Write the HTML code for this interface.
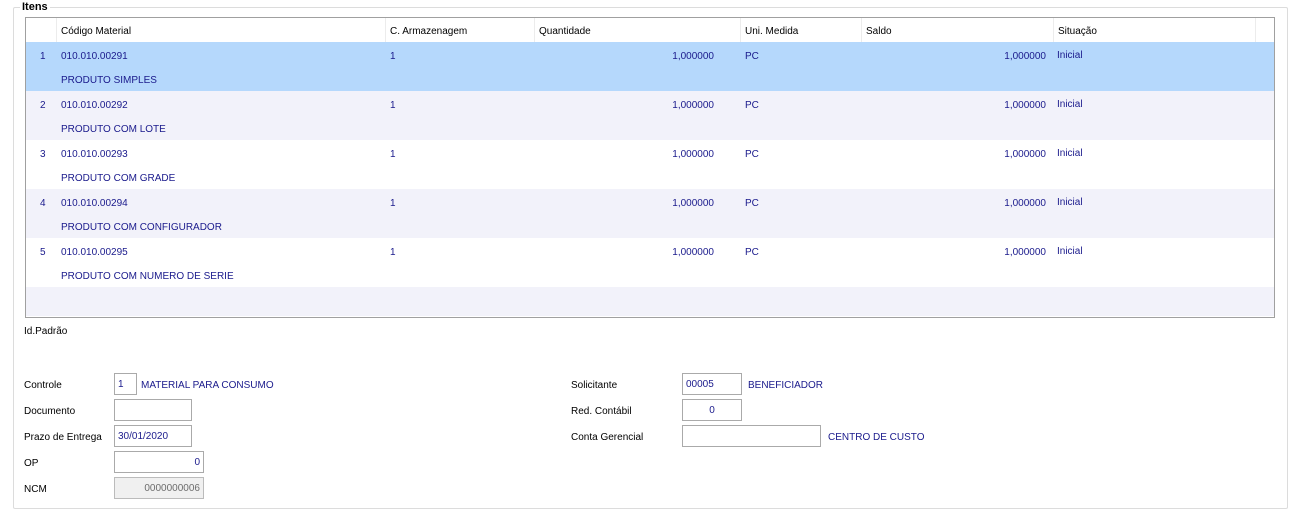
<!DOCTYPE html>
<html><head><meta charset="utf-8"><style>
*{margin:0;padding:0;box-sizing:border-box}
body{width:1298px;height:518px;background:#fff;font-family:"Liberation Sans",sans-serif;font-size:10px;color:#000;position:relative;overflow:hidden}
.a{position:absolute;white-space:nowrap;line-height:13px}
.b{color:#1a1a8c}
.fs{position:absolute;left:13px;top:7px;width:1275px;height:502px;border:1px solid #dcdcdc;border-radius:2px}
.leg{position:absolute;left:6px;top:-7px;background:#fff;padding:0 2px;font-weight:bold;font-size:11px;line-height:12px}
.grid{position:absolute;left:25px;top:17px;width:1250px;height:301px;border:1px solid #a0a0a0;background:#fff;overflow:hidden}
.hd{position:absolute;top:0;height:24px;line-height:27px;padding-left:4px;border-right:1px solid #ececec}
.row{position:absolute;left:0;width:1248px;height:49px}
.inp{position:absolute;border:1px solid #aaa;background:#fff;height:22px;line-height:22px;padding:0 3px;color:#1a1a8c}
</style></head><body>
<div class="fs"><div class="leg">Itens</div></div>
<div class="grid">
<div class="hd" style="left:0;width:31px"></div>
<div class="hd" style="left:31px;width:329px">Código Material</div>
<div class="hd" style="left:360px;width:149px">C. Armazenagem</div>
<div class="hd" style="left:509px;width:206px">Quantidade</div>
<div class="hd" style="left:715px;width:121px">Uni. Medida</div>
<div class="hd" style="left:836px;width:192px">Saldo</div>
<div class="hd" style="left:1028px;width:202px">Situação</div>
<div class="row" style="top:24px;background:#b5d8fc"></div>
<div class="row" style="top:73px;background:#f2f2fa"></div>
<div class="row" style="top:122px;background:#fff"></div>
<div class="row" style="top:171px;background:#f2f2fa"></div>
<div class="row" style="top:220px;background:#fff"></div>
<div class="row" style="top:269px;height:29px;background:#f2f2fa"></div>
</div>
<div class="a b" style="left:40px;top:50px">1</div><div class="a b" style="left:61px;top:50px">010.010.00291</div><div class="a b" style="left:390px;top:50px">1</div><div class="a b" style="left:668px;top:50px;width:46px;text-align:right">1,000000</div><div class="a b" style="left:745px;top:50px">PC</div><div class="a b" style="left:1000px;top:50px;width:46px;text-align:right">1,000000</div><div class="a b" style="left:1057px;top:49px">Inicial</div><div class="a b" style="left:61px;top:74px">PRODUTO SIMPLES</div>
<div class="a b" style="left:40px;top:99px">2</div><div class="a b" style="left:61px;top:99px">010.010.00292</div><div class="a b" style="left:390px;top:99px">1</div><div class="a b" style="left:668px;top:99px;width:46px;text-align:right">1,000000</div><div class="a b" style="left:745px;top:99px">PC</div><div class="a b" style="left:1000px;top:99px;width:46px;text-align:right">1,000000</div><div class="a b" style="left:1057px;top:98px">Inicial</div><div class="a b" style="left:61px;top:123px">PRODUTO COM LOTE</div>
<div class="a b" style="left:40px;top:148px">3</div><div class="a b" style="left:61px;top:148px">010.010.00293</div><div class="a b" style="left:390px;top:148px">1</div><div class="a b" style="left:668px;top:148px;width:46px;text-align:right">1,000000</div><div class="a b" style="left:745px;top:148px">PC</div><div class="a b" style="left:1000px;top:148px;width:46px;text-align:right">1,000000</div><div class="a b" style="left:1057px;top:147px">Inicial</div><div class="a b" style="left:61px;top:172px">PRODUTO COM GRADE</div>
<div class="a b" style="left:40px;top:197px">4</div><div class="a b" style="left:61px;top:197px">010.010.00294</div><div class="a b" style="left:390px;top:197px">1</div><div class="a b" style="left:668px;top:197px;width:46px;text-align:right">1,000000</div><div class="a b" style="left:745px;top:197px">PC</div><div class="a b" style="left:1000px;top:197px;width:46px;text-align:right">1,000000</div><div class="a b" style="left:1057px;top:196px">Inicial</div><div class="a b" style="left:61px;top:221px">PRODUTO COM CONFIGURADOR</div>
<div class="a b" style="left:40px;top:246px">5</div><div class="a b" style="left:61px;top:246px">010.010.00295</div><div class="a b" style="left:390px;top:246px">1</div><div class="a b" style="left:668px;top:246px;width:46px;text-align:right">1,000000</div><div class="a b" style="left:745px;top:246px">PC</div><div class="a b" style="left:1000px;top:246px;width:46px;text-align:right">1,000000</div><div class="a b" style="left:1057px;top:245px">Inicial</div><div class="a b" style="left:61px;top:270px">PRODUTO COM NUMERO DE SERIE</div>

<div class="a" style="left:24px;top:325px">Id.Padrão</div>

<div class="a" style="left:24px;top:379px">Controle</div>
<div class="inp" style="left:114px;top:373px;width:23px">1</div>
<div class="a b" style="left:141px;top:379px">MATERIAL PARA CONSUMO</div>
<div class="a" style="left:24px;top:405px">Documento</div>
<div class="inp" style="left:114px;top:399px;width:78px"></div>
<div class="a" style="left:24px;top:431px">Prazo de Entrega</div>
<div class="inp" style="left:114px;top:425px;width:78px">30/01/2020</div>
<div class="a" style="left:24px;top:457px">OP</div>
<div class="inp" style="left:114px;top:451px;width:90px;text-align:right">0</div>
<div class="a" style="left:24px;top:483px">NCM</div>
<div class="inp" style="left:114px;top:477px;width:90px;text-align:right;background:#f0f0f0;color:#6d6d6d;border-color:#bbb">0000000006</div>

<div class="a" style="left:571px;top:379px">Solicitante</div>
<div class="inp" style="left:682px;top:373px;width:60px">00005</div>
<div class="a b" style="left:748px;top:379px">BENEFICIADOR</div>
<div class="a" style="left:571px;top:405px">Red. Contábil</div>
<div class="inp" style="left:682px;top:399px;width:60px;text-align:center">0</div>
<div class="a" style="left:571px;top:431px">Conta Gerencial</div>
<div class="inp" style="left:682px;top:425px;width:139px"></div>
<div class="a b" style="left:828px;top:431px">CENTRO DE CUSTO</div>
</body></html>
